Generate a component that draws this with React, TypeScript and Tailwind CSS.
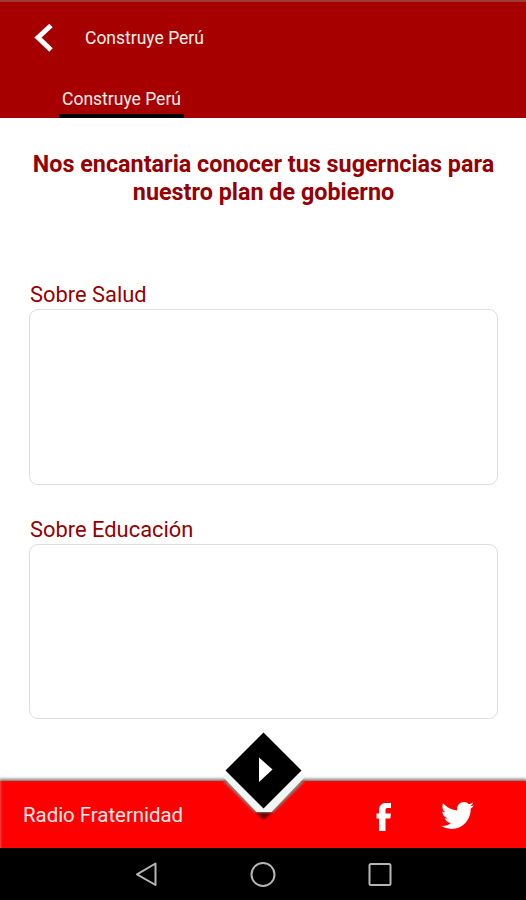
import React, { useState } from 'react';
import { FaTwitter } from 'react-icons/fa';

const topics = [
  { id: 'salud', label: 'Sobre Salud', box: 'h-[176px]' },
  { id: 'educacion', label: 'Sobre Educación', box: 'h-[175px]' },
];

const Header: React.FC = () => (
  <header className="flex h-[118px] flex-col border-t-2 border-[#9f3a3a] bg-[#a70000] text-white">
    <div className="flex h-[72px] items-center pl-[34px]">
      <button className="w-[51px]" aria-label="Volver">
        <svg width="20" height="30" viewBox="0 0 20 30" fill="none">
          <path d="M17 2.5L4 14.5L17 27" stroke="#fff" strokeWidth="5" />
        </svg>
      </button>
      <h1 className="text-[17.5px] leading-6 text-[#fff0e8]">Construye Perú</h1>
    </div>
    <nav className="flex flex-1 pl-[59px]">
      <button className="flex w-[125px] items-center justify-center border-b-4 border-black pt-[9px] text-[17.5px] leading-6 text-[#fff0e8]">
        Construye Perú
      </button>
    </nav>
  </header>
);

// Black diamond button with the white notch cut in the red bar
const PlayButton: React.FC = () => (
  <button className="absolute left-[213px] top-[-54px]" aria-label="Reproducir">
    <svg width="100" height="94" viewBox="0 0 100 94">
      <defs>
        <filter id="edge" x="-20%" y="-20%" width="140%" height="140%">
          <feGaussianBlur stdDeviation="1" />
        </filter>
      </defs>
      <path d="M42 85H60L51 92.500Z" fill="#650000" filter="url(#edge)" />
      <path d="M10 54H92L60 85.500H42Z" fill="#8b8080" filter="url(#edge)" />
      <path d="M11 48H91V51L58.500 85H43.500L11 51Z" fill="#f1f5f3" />
      <path d="M50.500 5.500L88.500 43.500L50.500 81.500L12.500 43.500Z" fill="#000" />
      <path d="M46 30.500L59.500 42.500L46 55Z" fill="#fff" />
    </svg>
  </button>
);

const App: React.FC = () => {
  const [answers, setAnswers] = useState<Record<string, string>>({});

  return (
    <div className="flex h-[900px] w-[526px] flex-col overflow-hidden bg-white font-[Roboto,sans-serif]">
      <Header />

      <main className="flex-1 px-[29px] pt-[32px]">
        <h2 className="-mx-4 pl-px text-center text-[23.35px] font-bold leading-7 text-[#970000]">
          Nos encantaria conocer tus sugerncias para
          <br />
          nuestro plan de gobierno
        </h2>

        <div className="mt-[75px] flex flex-col gap-[31px]">
          {topics.map((topic) => (
            <label key={topic.id} className="flex flex-col">
              <span className="h-7 pl-px text-[21.9px] leading-7 text-[#970000]">{topic.label}</span>
              <textarea
                className={`${topic.box} w-[469px] resize-none rounded-[9px] border-[1.5px] border-[#dedede] bg-white p-2 outline-none`}
                value={answers[topic.id] || ''}
                onChange={(e) => setAnswers({ ...answers, [topic.id]: e.target.value })}
              />
            </label>
          ))}
        </div>
      </main>

      {/* Radio player bar */}
      <section className="relative flex h-[67px] items-center bg-[#fe0000] pl-[23px] text-white shadow-[0_-1px_3px_1px_#777,inset_2px_0_2px_-1px_#ff4a4a]">
        <span className="w-[353px] text-[20.4px] leading-7 text-[#ffe8e8]">Radio Fraternidad</span>
        <svg width="16" height="30" viewBox="0 0 16 30" className="mt-1" fill="currentColor" aria-label="Facebook">
          <path d="M3 29V16.500H.5V11.500H3V8.500C3 3.500 5.500 1 10 1H15V6H11.500C10 6 9.500 6.800 9.500 8.200V11.500H15L14.300 16.500H9.500V29Z" />
        </svg>
        <FaTwitter className="ml-[49px] mt-[2px] h-[33px] w-[33px]" />
        <PlayButton />
      </section>

      {/* Android navigation */}
      <footer className="relative flex h-[52px] items-center bg-black">
        <svg width="526" height="52" viewBox="0 0 526 52" fill="none" stroke="#b5b5b5" strokeWidth="2">
          <path d="M155.500 15.500V37L137 26.300Z" strokeLinejoin="round" />
          <circle cx="263" cy="26.500" r="11.500" />
          <rect x="369.500" y="16" width="21" height="21" rx="1.500" />
        </svg>
      </footer>
    </div>
  );
};

export default App;
